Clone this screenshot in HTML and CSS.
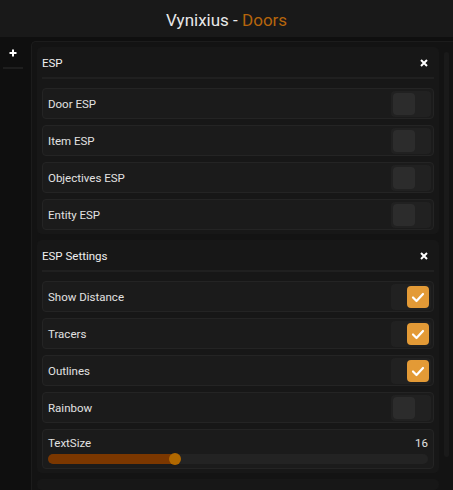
FILE: index.html
```html
<!DOCTYPE html>
<html>
<head>
<meta charset="utf-8">
<link rel="stylesheet" href="styles.css">
</head>
<body>
<div class="titlebar"><span class="t-main">Vynixius - </span><span class="t-accent">Doors</span></div>
<div class="main">
  <div class="sidebar">
    <svg class="plus" width="8" height="8" viewBox="0 0 8 8"><path d="M4 0.5V7.5M0.5 4H7.5" stroke="#fff" stroke-width="2"/></svg>
    <div class="side-line"></div>
  </div>
  <div class="container">
    <div class="content">
      <div class="card">
        <div class="card-head"><span>ESP</span><svg class="close" width="8" height="8" viewBox="0 0 8 8"><path d="M1 1L7 7M7 1L1 7" stroke="#fff" stroke-width="2"/></svg></div>
        <div class="sep"></div>
        <div class="rows">
          <div class="row"><span>Door ESP</span><div class="toggle"><div class="knob"></div></div></div>
          <div class="row"><span>Item ESP</span><div class="toggle"><div class="knob"></div></div></div>
          <div class="row"><span>Objectives ESP</span><div class="toggle"><div class="knob"></div></div></div>
          <div class="row"><span>Entity ESP</span><div class="toggle"><div class="knob"></div></div></div>
        </div>
      </div>
      <div class="card">
        <div class="card-head"><span>ESP Settings</span><svg class="close" width="8" height="8" viewBox="0 0 8 8"><path d="M1 1L7 7M7 1L1 7" stroke="#fff" stroke-width="2"/></svg></div>
        <div class="sep"></div>
        <div class="rows">
          <div class="row"><span>Show Distance</span><div class="toggle on"><div class="knob"><svg width="22" height="22" viewBox="0 0 22 22"><path d="M6 11.5L9.5 15L16 8" fill="none" stroke="#fff" stroke-width="2.2" stroke-linecap="round" stroke-linejoin="round"/></svg></div></div></div>
          <div class="row"><span>Tracers</span><div class="toggle on"><div class="knob"><svg width="22" height="22" viewBox="0 0 22 22"><path d="M6 11.5L9.5 15L16 8" fill="none" stroke="#fff" stroke-width="2.2" stroke-linecap="round" stroke-linejoin="round"/></svg></div></div></div>
          <div class="row"><span>Outlines</span><div class="toggle on"><div class="knob"><svg width="22" height="22" viewBox="0 0 22 22"><path d="M6 11.5L9.5 15L16 8" fill="none" stroke="#fff" stroke-width="2.2" stroke-linecap="round" stroke-linejoin="round"/></svg></div></div></div>
          <div class="row"><span>Rainbow</span><div class="toggle"><div class="knob"></div></div></div>
          <div class="row slider-row">
            <div class="slider-top"><span>TextSize</span><span>16</span></div>
            <div class="track"><div class="fill" style="width: 33.5%"></div><div class="thumb" style="left: 33.5%"></div></div>
          </div>
        </div>
      </div>
      <div class="card stub"></div>
    </div>
    <div class="scrollbar"></div>
  </div>
</div>
</body>
</html>
```
FILE: styles.css
```css
* { box-sizing: border-box; }
html, body { margin: 0; padding: 0; }
body {
  width: 453px;
  height: 490px;
  overflow: hidden;
  background: #0f0f0f;
  font-family: Roboto, "Noto Sans", sans-serif;
  font-size: 11.5px;
  color: #e2e2e2;
}
.titlebar {
  height: 37px;
  background: #191919;
  display: flex;
  justify-content: center;
  align-items: center;
  padding-top: 2px;
  font-size: 17px;
}
.t-main { color: #e8e8e8; white-space: pre; }
.t-accent { color: #b6650c; }
.main {
  display: flex;
  padding-top: 4px;
  height: 453px;
}
.sidebar {
  width: 31px;
  flex: none;
  display: flex;
  flex-direction: column;
  align-items: center;
  padding-top: 8px;
}
.plus { margin-left: -5px; }
.side-line {
  width: 20px;
  height: 2px;
  background: #1e1e1e;
  margin-top: 10px;
  margin-left: -5px;
}
.container {
  flex: 1;
  display: flex;
  background: #131313;
  border: 1px solid #1c1c1c;
  border-right: none;
  border-bottom: none;
  border-radius: 5px 0 0 0;
  padding: 5px 4px 0 5px;
  gap: 5px;
}
.content {
  flex: 1;
  display: flex;
  flex-direction: column;
  gap: 6px;
}
.scrollbar {
  width: 5px;
  flex: none;
  height: 405px;
  margin-top: 5px;
  background: #1a1a1a;
  border-radius: 3px;
}
.card {
  background: #171717;
  border-radius: 5px;
  padding: 0 5px 4px;
}
.card.stub { height: 20px; }
.card-head {
  height: 30px;
  display: flex;
  align-items: center;
  justify-content: space-between;
  color: #f0f0f0;
  padding-right: 6px;
  padding-top: 1px;
}
.sep {
  height: 2px;
  background: #202020;
  margin-bottom: 9px;
}
.rows {
  display: flex;
  flex-direction: column;
  gap: 6px;
}
.row {
  height: 31px;
  background: #1b1b1b;
  border: 1px solid #242424;
  border-radius: 4px;
  display: flex;
  align-items: center;
  justify-content: space-between;
  padding: 0 2px 0 5px;
}
.toggle {
  width: 40px;
  height: 26px;
  background: #212121;
  border-radius: 4px;
  padding: 2px;
  display: flex;
}
.knob {
  width: 22px;
  height: 22px;
  border-radius: 4px;
  background: #2c2c2c;
}
.toggle.on { justify-content: flex-end; }
.toggle.on .knob { background: #e39a36; }
.knob svg { display: block; }
.slider-row {
  height: 40px;
  flex-direction: column;
  align-items: stretch;
  justify-content: flex-start;
  padding: 6px 5px 0 5px;
}
.slider-top {
  display: flex;
  justify-content: space-between;
  line-height: 14px;
}
.track {
  position: relative;
  height: 10px;
  margin-top: 4px;
  background: #232323;
  border-radius: 5px;
}
.fill {
  height: 10px;
  background: #7b3700;
  border-radius: 5px;
}
.thumb {
  position: absolute;
  top: -1px;
  width: 12px;
  height: 12px;
  margin-left: -6px;
  border-radius: 50%;
  background: #b06800;
}
```
